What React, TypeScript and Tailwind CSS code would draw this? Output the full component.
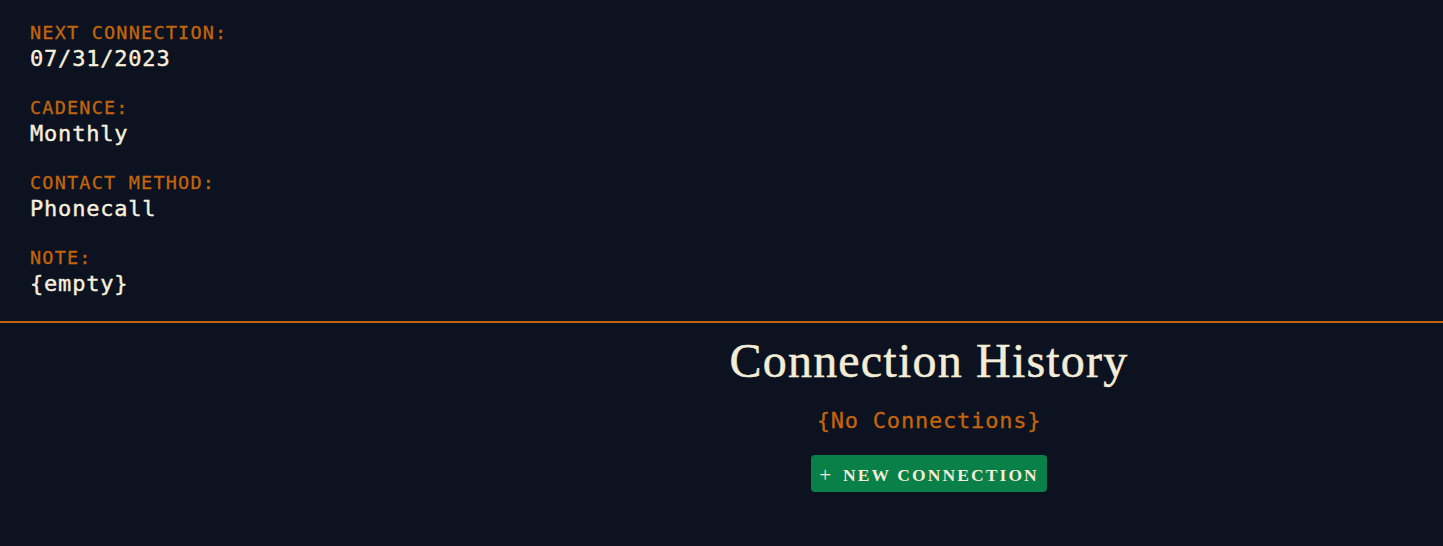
import React from "react";

const mono = "font-['DejaVu_Sans_Mono','Liberation_Mono',monospace]";

const fields = [
  { label: "Next Connection:", value: "07/31/2023" },
  { label: "Cadence:", value: "Monthly" },
  { label: "Contact Method:", value: "Phonecall" },
  { label: "Note:", value: "{empty}" },
];

export default function App() {
  return (
    <div className="min-h-[546px] w-full bg-[#0c1220]">
      <section className="flex flex-col gap-[23px] border-b-2 border-[#c2650c] px-[30px] pb-[23px] pt-[21px]">
        {fields.map((f) => (
          <div key={f.label} className="flex flex-col">
            <span className={`${mono} text-[18.5px] leading-[24px] tracking-[1.2px] uppercase text-[#c2650c] [-webkit-text-stroke:0.3px_#c2650c]`}>
              {f.label}
            </span>
            <span className={`${mono} text-[22px] leading-[28px] tracking-[0.8px] text-[#f5efdc] [-webkit-text-stroke:0.4px_#f5efdc]`}>
              {f.value}
            </span>
          </div>
        ))}
      </section>
      <section className="grid grid-cols-[415px_1fr] pt-[14px]">
        <div />
        <div className="flex flex-col items-center">
          <h2 className="font-['Liberation_Serif','Times_New_Roman',serif] text-[48px] leading-[48px] tracking-[1.2px] text-[#f3ecd6] [-webkit-text-stroke:0.5px_#f3ecd6]">
            Connection History
          </h2>
          <p className={`${mono} mt-[22px] text-[22px] leading-[28px] tracking-[0.8px] text-[#c2650c] [-webkit-text-stroke:0.3px_#c2650c]`}>
            {"{No Connections}"}
          </p>
          <button className="mt-[20px] flex h-[37px] w-[236px] items-center justify-center gap-[12px] rounded-[4px] bg-[#088048] pt-[4px] font-['Liberation_Serif','Times_New_Roman',serif] uppercase leading-none text-[#f3ecd6]">
            <span className="text-[21px] font-normal">+</span>
            <span className="text-[17.5px] font-bold tracking-[2.1px]">New Connection</span>
          </button>
        </div>
      </section>
    </div>
  );
}
